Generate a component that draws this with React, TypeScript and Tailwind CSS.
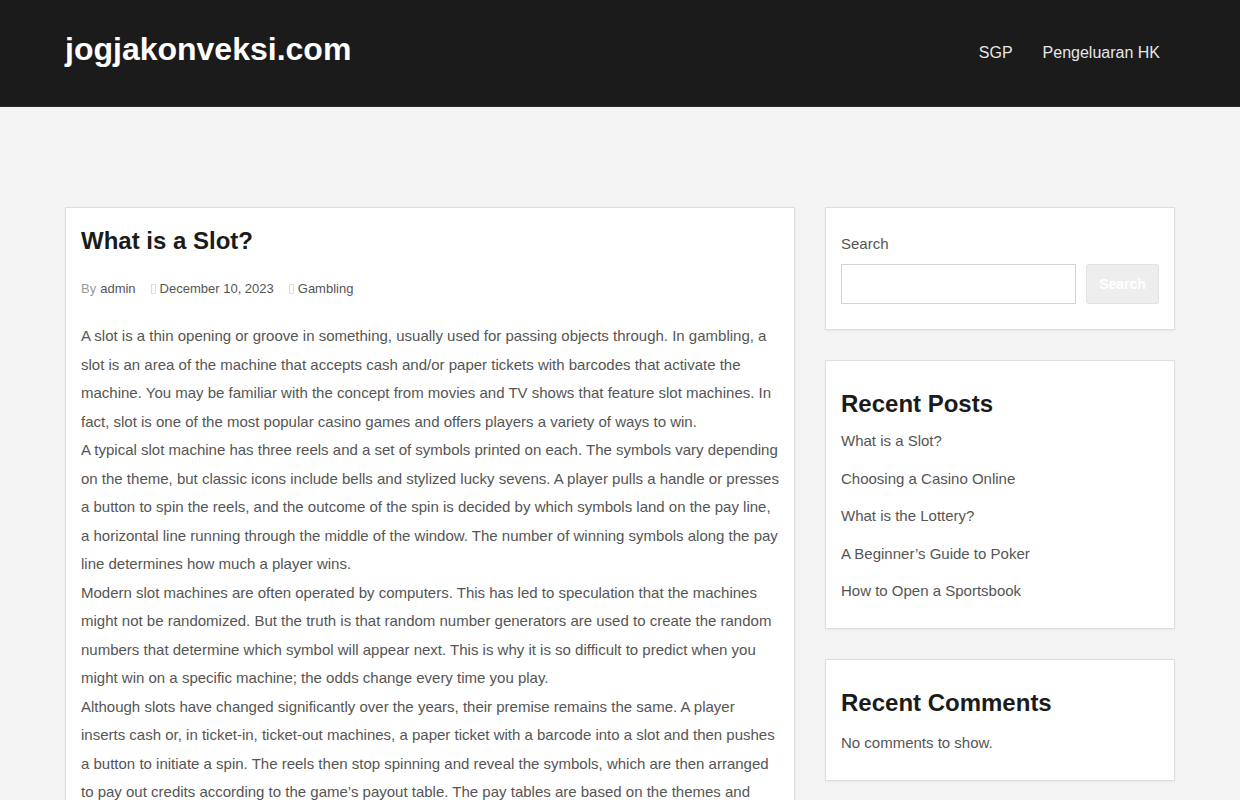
import React from 'react';

const posts = [
  'What is a Slot?',
  'Choosing a Casino Online',
  'What is the Lottery?',
  'A Beginner’s Guide to Poker',
  'How to Open a Sportsbook',
];

const paragraphs = [
  'A slot is a thin opening or groove in something, usually used for passing objects through. In gambling, a slot is an area of the machine that accepts cash and/or paper tickets with barcodes that activate the machine. You may be familiar with the concept from movies and TV shows that feature slot machines. In fact, slot is one of the most popular casino games and offers players a variety of ways to win.',
  'A typical slot machine has three reels and a set of symbols printed on each. The symbols vary depending on the theme, but classic icons include bells and stylized lucky sevens. A player pulls a handle or presses a button to spin the reels, and the outcome of the spin is decided by which symbols land on the pay line, a horizontal line running through the middle of the window. The number of winning symbols along the pay line determines how much a player wins.',
  'Modern slot machines are often operated by computers. This has led to speculation that the machines might not be randomized. But the truth is that random number generators are used to create the random numbers that determine which symbol will appear next. This is why it is so difficult to predict when you might win on a specific machine; the odds change every time you play.',
  'Although slots have changed significantly over the years, their premise remains the same. A player inserts cash or, in ticket-in, ticket-out machines, a paper ticket with a barcode into a slot and then pushes a button to initiate a spin. The reels then stop spinning and reveal the symbols, which are then arranged to pay out credits according to the game’s payout table. The pay tables are based on the themes and symbols of each game, and they can vary widely from one machine to another.',
];

// missing icon font glyph, shows as a faint box
function Tofu() {
  return <span className="mr-[4px] inline-block h-[10px] w-[5px] border border-[#ddd] align-[-1px]" />;
}

export default function App() {
  return (
    <div className="min-h-screen bg-[#f4f4f4] font-['Liberation_Sans',Arial,sans-serif]">
      <header className="h-[107px] border-b border-[#2a2a2a] bg-[#1b1b1b]">
        <div className="mx-auto flex w-[1110px] items-center justify-between pt-[29px]">
          <a className="text-[32px] font-bold leading-[40px] text-white">jogjakonveksi.com</a>
          <nav className="mr-[15px] mt-[8px] flex gap-[30px] text-[16px] text-[#e6e6e6]">
            <a>SGP</a>
            <a>Pengeluaran HK</a>
          </nav>
        </div>
      </header>

      <div className="mx-auto flex w-[1110px] items-start gap-[30px] pt-[100px]">
        <main className="w-[730px] border border-[#dedede] bg-white px-[15px] pt-[18px] pb-6 shadow-[0_1px_3px_rgba(0,0,0,0.05)]">
          <h1 className="text-[24px] font-bold leading-[30px] text-[#1b1b1b]">What is a Slot?</h1>
          <div className="mt-[23px] flex items-center text-[13px] leading-[20px] text-[#555]">
            <span className="text-[#999]">By</span>
            <span className="ml-[4px]">admin</span>
            <span className="ml-[15px]"><Tofu /></span>
            <span>December 10, 2023</span>
            <span className="ml-[15px]"><Tofu /></span>
            <span>Gambling</span>
          </div>
          <div className="mt-[23px] text-[15px] leading-[28.5px] text-[#555]">
            {paragraphs.map((p, i) => (
              <p key={i}>{p}</p>
            ))}
          </div>
        </main>

        <aside className="flex w-[350px] flex-col gap-[30px]">
          <section className="border border-[#dedede] bg-white px-[15px] pt-[24px] pb-[25px] shadow-[0_1px_3px_rgba(0,0,0,0.05)]">
            <label className="block text-[15px] leading-[24px] text-[#555]">Search</label>
            <div className="mt-[8px] flex gap-[10px]">
              <input className="h-[40px] w-[235px] border border-[#d4d4d4] bg-white outline-none" />
              <button className="h-[40px] w-[73px] rounded-[3px] border border-[#e2e2e2] bg-[#eeeeee] text-[14px] font-bold text-white">
                Search
              </button>
            </div>
          </section>

          <section className="border border-[#dedede] bg-white px-[15px] pt-[28px] pb-[18px] shadow-[0_1px_3px_rgba(0,0,0,0.05)]">
            <h2 className="text-[24px] font-bold leading-[30px] text-[#1b1b1b]">Recent Posts</h2>
            <ul className="mt-[3px] text-[15px] leading-[37.5px] text-[#555]">
              {posts.map((p) => (
                <li key={p}>{p}</li>
              ))}
            </ul>
          </section>

          <section className="border border-[#dedede] bg-white px-[15px] pt-[28px] pb-[27px] shadow-[0_1px_3px_rgba(0,0,0,0.05)]">
            <h2 className="text-[24px] font-bold leading-[30px] text-[#1b1b1b]">Recent Comments</h2>
            <p className="mt-[15px] text-[15px] leading-[20px] text-[#555]">No comments to show.</p>
          </section>
        </aside>
      </div>
    </div>
  );
}
